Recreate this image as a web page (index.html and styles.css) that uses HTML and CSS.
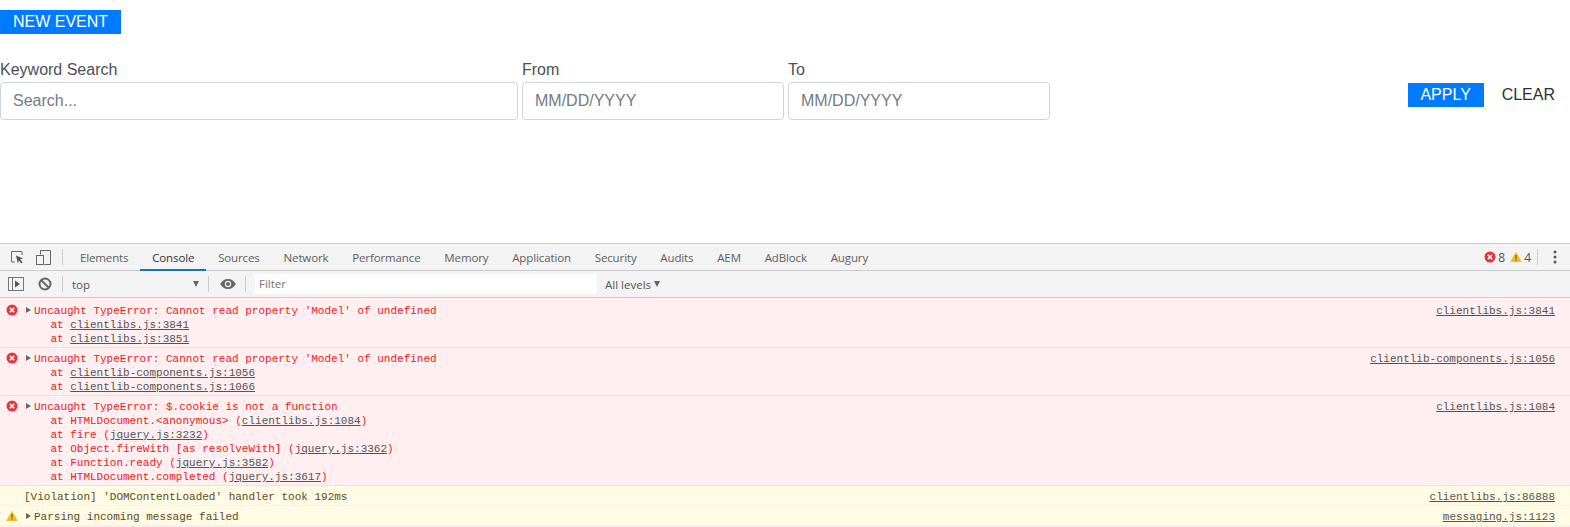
FILE: index.html
```html
<!DOCTYPE html>
<html lang="en">
<head>
<meta charset="utf-8">
<title>Events</title>
<link rel="stylesheet" href="styles.css">
</head>
<body>
<main class="page">
  <div class="new-row"><a class="btn">NEW EVENT</a></div>
  <form class="filters">
    <div class="field field-search"><label>Keyword Search</label><input placeholder="Search..."></div>
    <div class="field field-date"><label>From</label><input placeholder="MM/DD/YYYY"></div>
    <div class="field field-date"><label>To</label><input placeholder="MM/DD/YYYY"></div>
    <div class="actions"><a class="btn btn-apply">APPLY</a><a class="clear">CLEAR</a></div>
  </form>
</main>
<section class="devtools">
  <div class="tabbar">
    <svg class="tool" width="16" height="16" viewBox="0 0 16 16"><path d="M6 13H2.500V2.500H13V6" fill="none" stroke="#6e6e6e" stroke-width="1"/><path d="M7 6.500l7 3-3 1 2.600 2.800-1.200 1.100-2.600-2.800-1 3z" fill="#555"/></svg>
    <svg class="tool tool-device" width="16" height="16" viewBox="0 0 16 16"><path d="M4.500 5.500V1.500h10v14h-6" fill="none" stroke="#666"/><rect x=".5" y="6.500" width="7" height="9" fill="none" stroke="#666"/></svg>
    <span class="sep"></span>
    <nav class="tabs">
      <span class="tab">Elements</span><span class="tab active">Console</span><span class="tab">Sources</span><span class="tab">Network</span><span class="tab">Performance</span><span class="tab">Memory</span><span class="tab">Application</span><span class="tab">Security</span><span class="tab">Audits</span><span class="tab">AEM</span><span class="tab">AdBlock</span><span class="tab">Augury</span>
    </nav>
    <div class="counts">
      <svg width="12" height="12" viewBox="0 0 12 12"><circle cx="6" cy="6" r="5.500" fill="#e8323c"/><path d="M3.800 3.800l4.400 4.400M8.200 3.800L3.800 8.200" stroke="#fff" stroke-width="1.600"/></svg>
      <span class="count">8</span>
      <svg width="12" height="12" viewBox="0 0 12 12"><path d="M6 .8L11.800 11H.2z" fill="#f5bd22"/><path d="M5.400 4h1.200v3.800H5.400zM5.400 8.600h1.200v1.200H5.400z" fill="#7a5c00"/></svg>
      <span class="count">4</span>
      <span class="sep sep-counts"></span>
      <svg class="kebab" width="4" height="14" viewBox="0 0 4 14"><circle cx="2" cy="2" r="1.500" fill="#555"/><circle cx="2" cy="7" r="1.500" fill="#555"/><circle cx="2" cy="12" r="1.500" fill="#555"/></svg>
    </div>
  </div>
  <div class="consolebar">
    <svg class="tool-bar" width="16" height="14" viewBox="0 0 16 14"><rect x=".5" y=".5" width="15" height="13" fill="none" stroke="#777"/><path d="M4.500 .5v13" stroke="#777"/><path d="M7 3.500l5 3.500-5 3.500z" fill="#555"/></svg>
    <svg class="tool-clear" width="14" height="14" viewBox="0 0 14 14"><circle cx="7" cy="7" r="5.500" fill="none" stroke="#666" stroke-width="2"/><path d="M3 3l8 8" stroke="#666" stroke-width="2"/></svg>
    <span class="sep"></span>
    <span class="context">top</span>
    <span class="tri tri-context"></span>
    <span class="sep"></span>
    <svg class="eye" width="16" height="12" viewBox="0 0 16 12"><path d="M8 1C4.500 1 1.600 3.100.3 6c1.300 2.900 4.200 5 7.700 5s6.400-2.100 7.700-5C14.400 3.100 11.500 1 8 1z" fill="#666"/><circle cx="8" cy="6" r="3.200" fill="#f3f3f3"/><circle cx="8" cy="6" r="2" fill="#666"/></svg>
    <span class="sep"></span>
    <span class="filter">Filter</span>
    <span class="levels">All levels</span>
    <span class="tri"></span>
  </div>
  <div class="log">
    <div class="row err">
      <svg class="ic" width="12" height="12" viewBox="0 0 12 12"><circle cx="6" cy="6" r="5.500" fill="#e8323c"/><path d="M3.800 3.800l4.400 4.400M8.200 3.800L3.800 8.200" stroke="#fff" stroke-width="1.600"/></svg>
      <div class="msg"><div class="line first"><i class="arrow"></i>Uncaught TypeError: Cannot read property 'Model' of undefined</div><div class="line">    at <u>clientlibs.js:3841</u></div><div class="line">    at <u>clientlibs.js:3851</u></div></div>
      <u class="src">clientlibs.js:3841</u>
    </div>
    <div class="row err">
      <svg class="ic" width="12" height="12" viewBox="0 0 12 12"><circle cx="6" cy="6" r="5.500" fill="#e8323c"/><path d="M3.800 3.800l4.400 4.400M8.200 3.800L3.800 8.200" stroke="#fff" stroke-width="1.600"/></svg>
      <div class="msg"><div class="line first"><i class="arrow"></i>Uncaught TypeError: Cannot read property 'Model' of undefined</div><div class="line">    at <u>clientlib-components.js:1056</u></div><div class="line">    at <u>clientlib-components.js:1066</u></div></div>
      <u class="src">clientlib-components.js:1056</u>
    </div>
    <div class="row err">
      <svg class="ic" width="12" height="12" viewBox="0 0 12 12"><circle cx="6" cy="6" r="5.500" fill="#e8323c"/><path d="M3.800 3.800l4.400 4.400M8.200 3.800L3.800 8.200" stroke="#fff" stroke-width="1.600"/></svg>
      <div class="msg"><div class="line first"><i class="arrow"></i>Uncaught TypeError: $.cookie is not a function</div><div class="line">    at HTMLDocument.&lt;anonymous&gt; (<u>clientlibs.js:1084</u>)</div><div class="line">    at fire (<u>jquery.js:3232</u>)</div><div class="line">    at Object.fireWith [as resolveWith] (<u>jquery.js:3362</u>)</div><div class="line">    at Function.ready (<u>jquery.js:3582</u>)</div><div class="line">    at HTMLDocument.completed (<u>jquery.js:3617</u>)</div></div>
      <u class="src">clientlibs.js:1084</u>
    </div>
    <div class="row warn">
      <span class="ic"></span>
      <div class="msg"><div class="line">[Violation] 'DOMContentLoaded' handler took 192ms</div></div>
      <u class="src">clientlibs.js:86888</u>
    </div>
    <div class="row warn">
      <svg class="ic" width="12" height="12" viewBox="0 0 12 12"><path d="M6 .8L11.800 11H.2z" fill="#f5bd22"/><path d="M5.400 4h1.200v3.800H5.400zM5.400 8.600h1.200v1.200H5.400z" fill="#7a5c00"/></svg>
      <div class="msg"><div class="line first"><i class="arrow"></i>Parsing incoming message failed</div></div>
      <u class="src">messaging.js:1123</u>
    </div>
  </div>
</section>
</body>
</html>
```
FILE: styles.css
```css
* { box-sizing: border-box; }
html, body { margin: 0; padding: 0; height: 527px; overflow: hidden; background: #fff; }
body { font-family: "Liberation Sans", Arial, sans-serif; }

.page { height: 243px; padding-top: 10px; }
.new-row { display: flex; }
.btn { display: block; background: #007bff; color: #fff; font-size: 16px; line-height: 24px; padding: 0 13px; }
.filters { display: flex; align-items: flex-start; margin-top: 24px; }
.field { display: flex; flex-direction: column; }
.field label { font-size: 16px; line-height: 24px; color: #495057; height: 24px; }
.field input { height: 38px; border: 1px solid #ced4da; border-radius: 4px; padding: 0 12px; font: 16px "Liberation Sans", Arial, sans-serif; background: #fff; outline: 0; width: 100%; }
.field input::placeholder { color: #737b83; opacity: 1; }
.field-search { width: 518px; margin-right: 4px; }
.field-date { width: 262px; margin-right: 4px; }
.actions { margin-left: auto; display: flex; align-items: center; padding-top: 25px; padding-right: 15px; }
.btn-apply { width: 76px; padding: 0; text-align: center; }
.clear { font-size: 16px; line-height: 24px; color: #2b3036; margin-left: 18px; }

.devtools { height: 284px; background: #fff0f0; font-family: "Open Sans", "Noto Sans", sans-serif; }
.tabbar { height: 28px; display: flex; align-items: center; background: #f3f3f3; border-top: 1px solid #ccc; border-bottom: 1px solid #ccc; padding-left: 9px; }
.tool-device { margin-left: 11px; }
.sep { width: 1px; height: 16px; background: #ccc; flex: none; }
.tabbar > .sep { margin-left: 10px; }
.tabs { display: flex; height: 26px; margin-left: 5px; }
.tab { font-size: 11.5px; line-height: 27px; color: #606060; padding: 0 11.900px; white-space: nowrap; letter-spacing: -.12px; }
.tab.active { color: #333; box-shadow: inset 0 -2px 0 #1673b8; height: 27px; }
.counts { margin-left: auto; display: flex; align-items: center; padding-right: 13px; font-size: 12px; color: #555; }
.count { margin-left: 2px; margin-right: 5px; }
.counts .sep-counts { margin-left: 1px; margin-right: 15px; }
.consolebar { height: 27px; display: flex; align-items: center; background: #f3f3f3; border-bottom: 1px solid #ccc; padding-left: 8px; font-size: 11.500px; color: #555; }
.tool-clear { margin-left: 14px; margin-right: 1px; }
.consolebar .sep { margin-left: 9px; }
.context { width: 121px; margin-left: 9px; }
.tri { width: 0; height: 0; border-left: 3.500px solid transparent; border-right: 3.500px solid transparent; border-top: 6px solid #666; margin-left: 3px; }
.tri-context { margin-left: 0; }
.eye { margin-left: 11px; }
.filter { width: 342px; height: 20px; line-height: 20px; background: #fff; padding-left: 4px; margin-left: 9px; color: #757575; }
.levels { margin-left: 8px; }

.log { font: 11px/14px "Liberation Mono", monospace; padding-top: 2px; }
.row { display: flex; padding: 4px 15px 1px 0; border-bottom: 1px solid; }
.err { background: #ffeff0; border-color: #fddcdc; color: #ee1c1c; }
.warn { background: #fffbe5; border-color: #fdf3c8; color: #5c4a1a; }
.ic { flex: none; width: 12px; height: 12px; margin: 0 0 0 6px; }
.msg { flex: 1; padding-left: 6px; min-width: 0; }
.line { white-space: pre; }
.line.first { position: relative; padding-left: 10px; }
.arrow { position: absolute; left: 2px; top: 3px; width: 0; height: 0; border-top: 3.500px solid transparent; border-bottom: 3.500px solid transparent; border-left: 5px solid #666; }
u { color: #545454; }
.src { flex: none; }
```
